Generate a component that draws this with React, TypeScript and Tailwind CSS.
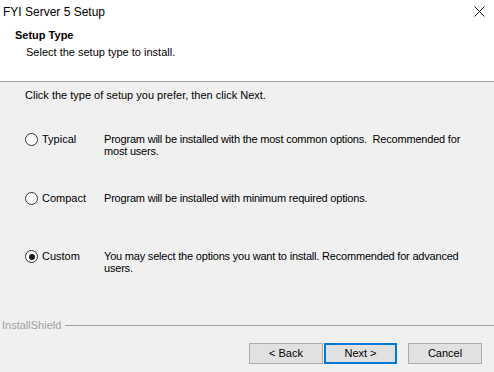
import React from "react";

const sys = { fontFamily: '"Liberation Sans", Arial, sans-serif' };

function Radio({ checked }: { checked?: boolean }) {
  return (
    <span className="flex h-[13px] w-[13px] shrink-0 items-center justify-center rounded-full border border-[#333333] bg-white">
      {checked && <span className="h-[6px] w-[6px] rounded-full bg-[#1a1a1a]" />}
    </span>
  );
}

interface Option {
  label: string;
  lines: string[];
  checked?: boolean;
}

const OPTIONS: Option[] = [
  {
    label: "Typical",
    lines: ["Program will be installed with the most common options.\u00a0 Recommended for", "most users."],
  },
  { label: "Compact", lines: ["Program will be installed with minimum required options."] },
  {
    label: "Custom",
    lines: ["You may select the options you want to install. Recommended for advanced", "users."],
    checked: true,
  },
];

function OptionRow({ opt }: { opt: Option }) {
  return (
    <div className="flex items-start">
      <div className="flex h-[13px] w-[104px] shrink-0 items-center gap-[4px] pl-[25px]">
        <Radio checked={opt.checked} />
        <span>{opt.label}</span>
      </div>
      <div className="flex flex-col tracking-[-0.2px]">
        {opt.lines.map((l) => (
          <span key={l} className="h-[12px] whitespace-pre leading-[13px]">
            {l}
          </span>
        ))}
      </div>
    </div>
  );
}

function Btn({ children, focused }: { children: React.ReactNode; focused?: boolean }) {
  return (
    <button
      className={
        focused
          ? "flex h-[21px] w-[73px] items-center justify-center border-2 border-[#0078d7] bg-[#e1e1e1] text-[11px] text-black"
          : "flex h-[21px] w-[74px] items-center justify-center border border-[#adadad] bg-[#e1e1e1] text-[11px] text-black"
      }
    >
      {children}
    </button>
  );
}

export default function App() {
  return (
    <div className="flex h-[372px] w-[494px] flex-col overflow-hidden bg-[#f0f0f0] text-[11px] text-black" style={sys}>
      {/* title bar + header */}
      <div className="flex h-[82px] shrink-0 flex-col border-b border-[#a0a0a0] bg-white">
        <div className="flex h-[23px] items-center justify-between pl-[3px] pr-[7px]">
          <span className="text-[12px]">FYI Server 5 Setup</span>
          <svg width="11" height="11" viewBox="0 0 11 11" className="mr-[2px]">
            <path d="M0.5 0.5 L10.5 10.5 M10.5 0.5 L0.5 10.5" stroke="#111" strokeWidth="1" />
          </svg>
        </div>
        <div className="mt-[6px] pl-[15px] font-bold leading-[13px]">Setup Type</div>
        <div className="mt-[4px] pl-[26px] leading-[13px]">Select the setup type to install.</div>
      </div>

      {/* body */}
      <div className="mt-[7px] pl-[25px] leading-[13px]">Click the type of setup you prefer, then click Next.</div>

      <div className="mt-[31px] flex flex-col">
        <div className="h-[59px]">
          <OptionRow opt={OPTIONS[0]} />
        </div>
        <div className="h-[58px]">
          <OptionRow opt={OPTIONS[1]} />
        </div>
        <div>
          <OptionRow opt={OPTIONS[2]} />
        </div>
      </div>

      {/* footer */}
      <div className="mt-auto flex items-center pb-[11px]">
        <span className="pl-[2px] pr-[4px] leading-[13px] text-[#a0a0a0]">InstallShield</span>
        <span className="h-px flex-1 bg-[#a0a0a0]" />
      </div>
      <div className="flex h-[29px] shrink-0 items-start pl-[249px]">
        <Btn>&lt; Back</Btn>
        <span className="w-px" />
        <Btn focused>Next &gt;</Btn>
        <span className="w-[11px]" />
        <Btn>Cancel</Btn>
      </div>
    </div>
  );
}
